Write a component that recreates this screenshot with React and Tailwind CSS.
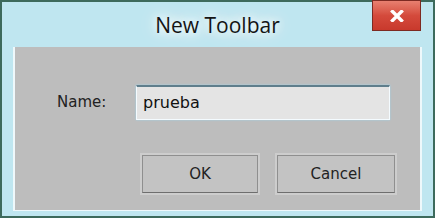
export default function App() {
  return (
    <div className="w-[435px] h-[218px] bg-[#3d6a5c] p-[2px] overflow-hidden">
      <div className="relative w-full h-full bg-[#bfe6f0] flex flex-col">
        <div className="h-[45px] flex items-center justify-center shrink-0">
          <span
            className="text-[21px] text-[#141414] mt-[2px] [text-shadow:0_0_8px_#ffffff,0_0_14px_#ffffff,0_0_20px_#eefaff]"
            style={{ fontFamily: '"Open Sans", "Noto Sans", sans-serif' }}
          >
            New Toolbar
          </span>
        </div>
        <div className="absolute right-[12px] top-[-2px] w-[49px] h-[31px] border border-[#7d2a22] bg-gradient-to-b from-[#e88070] via-[#d44a3c] to-[#c8392c] flex items-center justify-center">
          <svg width="14" height="12" viewBox="0 0 14 12">
            <path d="M2.5 1.5 L11.5 10.5 M11.5 1.5 L2.5 10.5" stroke="#ffffff" strokeWidth="3.4" strokeLinecap="square" />
          </svg>
        </div>
        <div className="mx-[11px] h-[164px] border-l-[2px] border-r-[2px] border-b border-[#eef8fb] bg-[#bdbdbd] flex flex-col">
          <div className="flex items-center mt-[38px] h-[35px]">
            <span
              className="ml-[42px] w-[79px] text-[15px] text-[#222]"
              style={{ fontFamily: '"DejaVu Sans", Tahoma, sans-serif' }}
            >
              Name:
            </span>
            <div className="w-[254px] h-[35px] border-t-2 border-t-[#5f7e8c] border-x border-b border-x-[#f4fbff] border-b-[#f4fbff] bg-[#e4e4e4] flex items-center px-[6px] shadow-[0_0_2px_#9fd4ea]">
              <span
                className="text-[16px] text-[#111]"
                style={{ fontFamily: '"DejaVu Sans", Tahoma, sans-serif' }}
              >
                prueba
              </span>
            </div>
          </div>
          <div className="flex mt-[35px] ml-[127px] gap-[19px]">
            <button
              className="w-[116px] h-[38px] border border-[#8f8f8f] border-b-[#6e6e6e] bg-[#c3c3c3] text-[15px] text-[#222] shadow-[0_0_0_2px_#cdcdcd]"
              style={{ fontFamily: '"DejaVu Sans", Tahoma, sans-serif' }}
            >
              OK
            </button>
            <button
              className="w-[118px] h-[38px] border border-[#8f8f8f] border-b-[#6e6e6e] bg-[#c3c3c3] text-[15px] text-[#222] shadow-[0_0_0_2px_#cdcdcd]"
              style={{ fontFamily: '"DejaVu Sans", Tahoma, sans-serif' }}
            >
              Cancel
            </button>
          </div>
        </div>
      </div>
    </div>
  );
}
